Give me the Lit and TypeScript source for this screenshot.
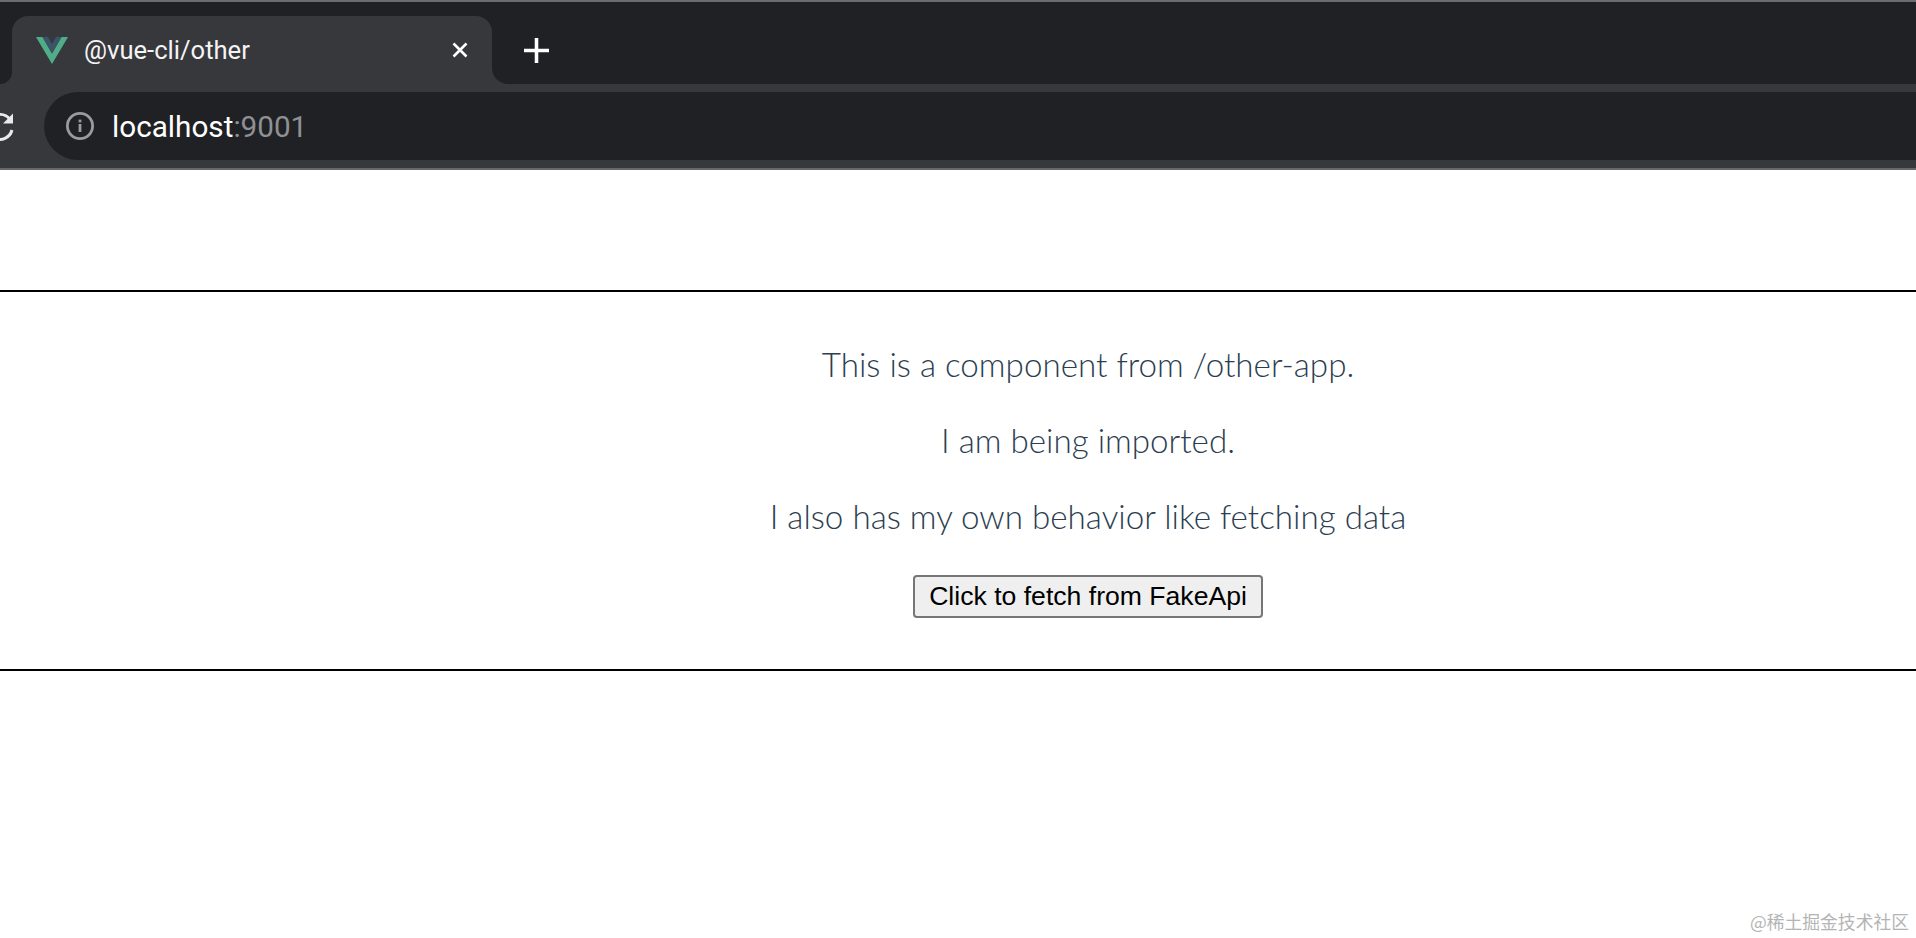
import { LitElement, html, css } from "lit";
import { customElement } from "lit/decorators.js";

@customElement("app-root")
export class AppRoot extends LitElement {
  static styles = css`
    :host { display: block; height: 938px; position: relative; overflow: hidden; background: #fff; font-family: "Liberation Sans", sans-serif; }
    .chrome { border-top: 2px solid #6b6c6f; border-bottom: 2px solid #67686a; background: #37383c; }
    .strip { display: flex; height: 82px; }
    .stub { width: 12px; background: #202124; border-bottom-right-radius: 16px; }
    .tab-wrap { width: 480px; background: #202124; padding-top: 14px; display: flex; }
    .tab { flex: 1; background: #37383c; border-radius: 16px 16px 0 0; display: flex; align-items: center; padding: 0 23px 0 24px; gap: 16px; color: #f4f4f5; font: 400 25.6px Roboto, sans-serif; }
    .tab .vue { width: 32px; height: 27px; flex: none; }
    .tab .title { flex: 1; margin-top: -1px; }
    .tab .close { width: 18px; height: 18px; flex: none; }
    .rest { flex: 1; background: #202124; border-bottom-left-radius: 16px; display: flex; align-items: center; padding: 14px 0 0 32px; }
    .plus { width: 25px; height: 25px; }
    .toolbar { height: 84px; display: flex; align-items: flex-start; padding-top: 8px; box-sizing: border-box; }
    .reload { width: 44px; height: 68px; flex: none; display: flex; align-items: center; justify-content: flex-end; overflow: hidden; }
    .reload svg { width: 30px; height: 30px; flex: none; margin-right: 29px; }
    .omni { flex: 1; height: 68px; background: #202124; border-radius: 34px 0 0 34px; display: flex; align-items: center; padding-left: 21px; gap: 17px; font: 400 29.7px Roboto, sans-serif; color: #fff; }
    .omni svg { width: 30px; height: 30px; flex: none; }
    .port { color: #8f9195; }
    .top-space { height: 120px; }
    hr { margin: 0; border: 0; height: 2px; background: #000; }
    .content { padding: 50px 0 0 260px; display: flex; flex-direction: column; align-items: center; height: 377px; box-sizing: border-box; }
    p { margin: 0 0 31px; font: 300 33.2px/45px Lato, sans-serif; color: #2c3e50; white-space: nowrap; }
    button { width: 350px; height: 43px; margin-top: 5px; padding: 0; font: 400 26.6px "Liberation Sans", sans-serif; color: #000; background: #efefef; border: 2px solid #767676; border-radius: 4px; }
    .mark { position: absolute; right: 7px; bottom: 6px; font: 400 17.8px/22px "Noto Sans CJK SC", sans-serif; color: #b4b4b4; }
  `;

  render() {
    return html`
      <div class="chrome">
        <div class="strip">
          <div class="stub"></div>
          <div class="tab-wrap">
            <div class="tab">
              <svg class="vue" viewBox="0 0 32 27">
                <path d="M0 0H6.5L16 16.5L25.5 0H32L16 27Z" fill="#4fae87"/>
                <path d="M6.5 0H12L16 7L20 0H25.5L16 16.5Z" fill="#3c5468"/>
              </svg>
              <span class="title">@vue-cli/other</span>
              <svg class="close" viewBox="0 0 18 18"><path d="M2.5 2.5L15.5 15.5M15.5 2.5L2.5 15.5" stroke="#fff" stroke-width="2.6" fill="none"/></svg>
            </div>
          </div>
          <div class="rest">
            <svg class="plus" viewBox="0 0 24 24"><path d="M12 0V24M0 12H24" stroke="#fff" stroke-width="3.4" fill="none"/></svg>
          </div>
        </div>
        <div class="toolbar">
          <div class="reload">
            <svg viewBox="0 0 30 30">
              <path d="M25 8.5A12.5 12.5 0 1 0 27 19" stroke="#e8eaed" stroke-width="3" fill="none"/>
              <path d="M28 2.5V12.5H18Z" fill="#e8eaed"/>
            </svg>
          </div>
          <div class="omni">
            <svg viewBox="0 0 30 30">
              <circle cx="15" cy="15" r="12.6" stroke="#9a9b9e" stroke-width="2.8" fill="none"/>
              <rect x="13.6" y="13" width="2.8" height="8" fill="#9a9b9e"/>
              <rect x="13.6" y="8.6" width="2.8" height="2.8" fill="#9a9b9e"/>
            </svg>
            <span>localhost<span class="port">:9001</span></span>
          </div>
        </div>
      </div>
      <div class="top-space"></div>
      <hr />
      <div class="content">
        <p>This is a component from /other-app.</p>
        <p>I am being imported.</p>
        <p>I also has my own behavior like fetching data</p>
        <button>Click to fetch from FakeApi</button>
      </div>
      <hr />
      <div class="mark">@稀土掘金技术社区</div>
    `;
  }
}
